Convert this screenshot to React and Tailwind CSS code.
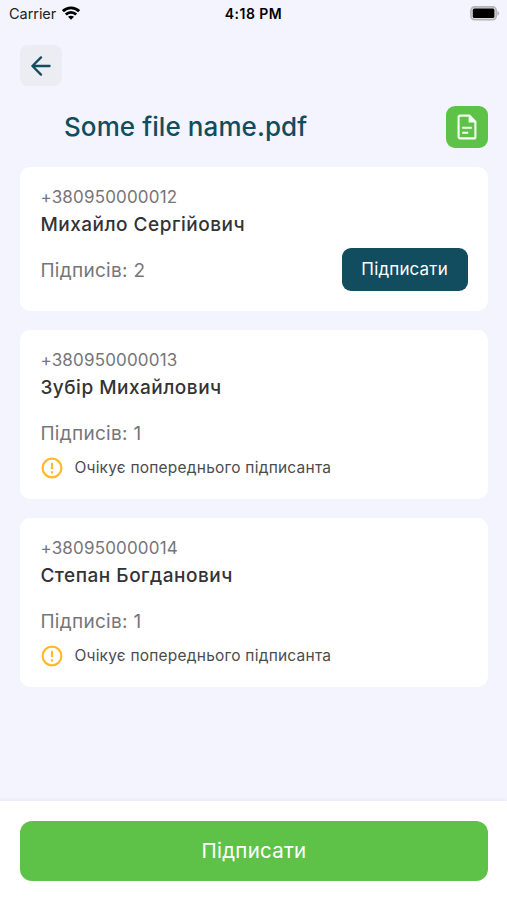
import React from "react";

const signers = [
  { phone: "+380950000012", name: "Михайло Сергійович", count: 2, canSign: true },
  { phone: "+380950000013", name: "Зубір Михайлович", count: 1, canSign: false },
  { phone: "+380950000014", name: "Степан Богданович", count: 1, canSign: false },
];

function StatusBar() {
  return (
    <div className="grid grid-cols-3 items-center h-[27px] pl-[9px] pr-[7px] text-black">
      <div className="flex items-center gap-[6px]">
        <span className="text-[14.5px] leading-[18px] tracking-[-0.05px] text-[#222]">Carrier</span>
        <svg width="18" height="14" viewBox="0 0 18 14" className="-mt-[2px]" fill="none" stroke="currentColor" strokeWidth="2.8">
          <path d="M0.9 5.2C5.4 0.7 12.6 0.7 17.1 5.2" />
          <path d="M3.8 8.6C6.7 5.7 11.3 5.7 14.2 8.6" />
          <path d="M9 13.8L6 10.8C7.7 9.3 10.3 9.3 12 10.8Z" fill="currentColor" stroke="none" />
        </svg>
      </div>
      <span className="text-center text-[14px] leading-[18px] font-semibold tracking-[0.45px] -ml-[2px]">4:18 PM</span>
      <div className="flex justify-end">
        <svg width="30" height="15" viewBox="0 0 30 15">
          <rect x="0.9" y="0.9" width="25.4" height="12.8" rx="3.6" fill="#d9dae0" stroke="#b4b4ba" strokeWidth="1.6" />
          <rect x="2.8" y="2.6" width="21.6" height="9.4" rx="1.6" fill="#000" />
          <path d="M27.4 5C29.8 5.8 29.8 8.8 27.4 9.6Z" fill="#b4b4ba" />
        </svg>
      </div>
    </div>
  );
}

function FileIcon() {
  return (
    <svg width="20" height="26" viewBox="0 0 20 26" fill="none" stroke="#f4fff0" strokeWidth="2.1">
      <path d="M12.4 1.6H3.1A1.5 1.5 0 0 0 1.6 3.1V22.9A1.5 1.5 0 0 0 3.1 24.4H16.9A1.5 1.5 0 0 0 18.4 22.9V7.8Z" strokeLinejoin="round" />
      <path d="M11.6 1.4V8.6H18.8Z" fill="#f4fff0" stroke="none" />
      <path d="M5.2 13.8H14.8M5.2 18.7H11.2" />
    </svg>
  );
}

function SignerCard({ signer }) {
  return (
    <div className="bg-white rounded-[10px] px-5 pt-[18px] pb-5">
      <p className="text-[17px] leading-[25px] tracking-[0.18px] text-[#77757a]">{signer.phone}</p>
      <p className="text-[19px] leading-[30px] tracking-[0.5px] font-[480] text-[#333335]">{signer.name}</p>
      {signer.canSign ? (
        <div className="flex items-center justify-between mt-2">
          <span className="pt-[2px] text-[19px] leading-6 tracking-[0.3px] text-[#77757a]">Підписів: {signer.count}</span>
          <button className="w-[126px] h-[43px] rounded-[9px] bg-[#124c5f] text-white text-[17px] tracking-[0.15px]">
            Підписати
          </button>
        </div>
      ) : (
        <>
          <p className="mt-[19px] text-[19px] leading-6 tracking-[0.3px] text-[#77757a]">Підписів: {signer.count}</p>
          <div className="flex items-center mt-[11px] h-[22px] gap-[11px]">
            <svg width="22" height="22" viewBox="0 0 22 22" className="ml-[1px]" fill="none" stroke="#fdba2c" strokeWidth="2.2">
              <circle cx="11" cy="11" r="9.4" />
              <path d="M11 5.8V12.2M11 14.2V16.4" />
            </svg>
            <span className="text-[15.5px] leading-5 tracking-[0.22px] text-[#4c4c4e]">
              Очікує попереднього підписанта
            </span>
          </div>
        </>
      )}
    </div>
  );
}

export default function App() {
  return (
    <div className="flex flex-col h-[900px] w-full bg-[#f3f4fd] font-['Inter',sans-serif]">
      <StatusBar />

      <div className="flex-1 pl-[20.4px] pr-[19.4px]">
        <button className="flex items-center justify-center mt-[18px] w-[41.4px] h-[41px] rounded-[8px] bg-[#ecedf3]">
          <svg width="20" height="20" viewBox="0 0 20 20" fill="none" stroke="#124c5f" strokeWidth="2.3" strokeLinecap="round" strokeLinejoin="round">
            <path d="M18.6 10H1.4M10 1.4L1.4 10L10 18.6" />
          </svg>
        </button>

        <div className="flex items-center justify-between mt-5 pl-[43.6px]">
          <h1 className="text-[26px] leading-8 tracking-[0.08px] font-[460] text-[#124c5f]">Some file name.pdf</h1>
          <div className="flex items-center justify-center w-[42px] h-[42px] rounded-[9px] bg-[#5fc248]">
            <FileIcon />
          </div>
        </div>

        <div className="flex flex-col gap-[19px] mt-[19px]">
          {signers.map((s) => (
            <SignerCard key={s.phone} signer={s} />
          ))}
        </div>
      </div>

      <div className="h-[99px] pl-[20.4px] pr-[19.4px] pt-5 bg-white shadow-[0_-2px_3px_rgba(0,0,0,0.04)]">
        <button className="w-full h-[60px] rounded-[12px] bg-[#5fc248] text-white text-[20.5px] tracking-[0.25px]">
          Підписати
        </button>
      </div>
    </div>
  );
}
